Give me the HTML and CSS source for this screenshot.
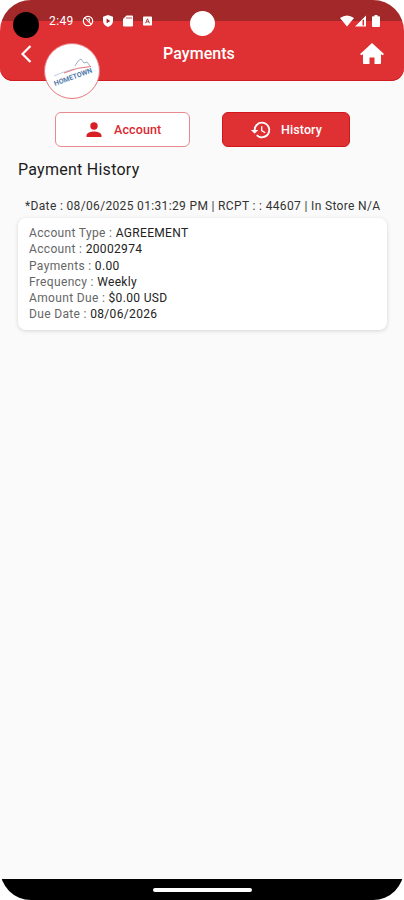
FILE: index.html
```html
<!DOCTYPE html>
<html lang="en">
<head>
<meta charset="utf-8">
<title>Payments</title>
<link rel="stylesheet" href="styles.css">
</head>
<body>
<div class="phone">
  <header class="header">
    <div class="status">
      <span class="time">2:49</span>
      <svg class="s-block" viewBox="0 0 12 12"><circle cx="6" cy="6" r="4.700"/><path d="M2.700 2.700 9.300 9.300M5.500 4h2v2.500"/></svg>
      <svg class="s-shield" viewBox="0 0 12 12"><path fill="#fff" d="M6 0 11 1.800V6c0 3-2.200 5-5 6-2.800-1-5-3-5-6V1.800z"/><path fill="#a51f22" d="M4.600 3.600 8.200 6 4.600 8.200z"/></svg>
      <svg class="s-card" viewBox="0 0 10 12"><path fill="#fff" d="M3.500.5H9q1 0 1 1v9q0 1-1 1H1q-1 0-1-1V4z"/><path stroke="#b92a2c" stroke-width=".8" d="M4 2v2M6 2v2M8 2v2"/></svg>
      <svg class="s-a" viewBox="0 0 10 10"><rect width="10" height="10" rx="1" fill="#fff"/><path fill="none" stroke="#9c2a2c" d="M2.800 7.500 5 2.500l2.200 5M3.700 6h2.600"/></svg>
      <span class="spacer"></span>
      <svg class="s-wifi" viewBox="0 0 14 12"><path fill="#fff" d="M0 3Q7-2 14 3L7 11.500z"/></svg>
      <svg class="s-cell" viewBox="0 0 12 12"><path fill="#fff" fill-rule="evenodd" d="M0 11.500 11 .5v11zM7.500 5.500v5h1.500v-6z"/></svg>
      <svg class="s-batt" viewBox="0 0 8 12"><path fill="#fff" d="M2.500 0h3v1.300H7q1 0 1 1V11q0 1-1 1H1q-1 0-1-1V2.300q0-1 1-1h1.500z"/></svg>
    </div>
    <nav class="bar">
      <svg class="back" viewBox="0 0 12 20"><path d="M10.500 2 2.500 10l8 8"/></svg>
      <h1>Payments</h1>
      <svg class="home" viewBox="0 0 24 22"><path fill="#fff" d="M12 0 24 11l-1.300 1.300L21 11.200V20q0 1-1 1H14.500v-6.500h-5V21H4q-1 0-1-1v-8.800l-1.700 1.100L0 11l4-3.600z"/></svg>
    </nav>
    <span class="cutout"></span>
    <span class="camera"></span>
    <div class="logo">
      <svg viewBox="0 0 54 54">
        <g fill="none"><path stroke="#b9c5da" stroke-width=".9" d="M9 32Q20 27 29 25"/><path stroke="#8999b5" stroke-width=".8" d="m30 22 3-5 3-2 3 4 3-1 3 4"/><path stroke="#e5737c" d="M19 29Q32 23 46 22.500"/></g>
        <text x="10" y="42" transform="rotate(-20 10 42)" textLength="40" lengthAdjust="spacingAndGlyphs">HOMETOWN</text>
      </svg>
    </div>
  </header>
  <main>
    <div class="tabs">
      <button class="tab account"><svg viewBox="0 0 16 16"><circle cx="8" cy="4" r="3.700"/><path d="M.5 15v-1.500C.5 10.500 5 9.400 8 9.400s7.500 1.100 7.500 4.100V15z"/></svg><span>Account</span></button>
      <button class="tab history"><svg viewBox="0 0 24 24"><path d="M13 3a9 9 0 0 0-9 9H1l3.890 3.890.07.14L9 12H6a7 7 0 1 1 2.060 4.940l-1.420 1.420A9 9 0 1 0 13 3zm-1 5v5l4.280 2.540.72-1.210-3.500-2.080V8z"/></svg><span>History</span></button>
    </div>
    <h2>Payment History</h2>
    <p class="receipt">*Date : 08/06/2025 01:31:29 PM | RCPT : : 44607 | In Store N/A</p>
    <section class="card">
      <p>Account Type : <b>AGREEMENT</b></p>
      <p>Account : <b>20002974</b></p>
      <p>Payments : <b>0.00</b></p>
      <p>Frequency : <b>Weekly</b></p>
      <p>Amount Due : <b>$0.00 USD</b></p>
      <p>Due Date : <b>08/06/2026</b></p>
    </section>
  </main>
  <footer><span></span></footer>
</div>
</body>
</html>
```
FILE: styles.css
```css
* { box-sizing: border-box; margin: 0; padding: 0; }
body { background: #fff; font-family: Roboto, sans-serif; color: #222; }
svg { display: block; flex: none; }
.phone { width: 404px; height: 900px; border-radius: 31px; overflow: hidden; background: #fafafa; display: flex; flex-direction: column; }
.header { position: relative; height: 81px; flex: none; border-radius: 0 0 13px 13px; background: linear-gradient(#a3282a 0 21px, #df3134 21px); box-shadow: inset 0 -1px #d01d22; }
.status { height: 42px; padding: 0 24px 0 49px; display: flex; align-items: center; color: #fff; }
.time { font-size: 12px; width: 33px; letter-spacing: .4px; }
.s-block { width: 12px; height: 12px; fill: none; stroke: #fff; stroke-width: 1.2; }
.s-shield { width: 12px; height: 12px; margin-left: 8px; }
.s-card { width: 10px; height: 12px; margin-left: 9px; }
.s-a { width: 9px; height: 10px; margin-left: 10px; }
.spacer { flex: 1; }
.s-wifi { width: 14px; height: 12px; }
.s-cell { width: 12px; height: 12px; margin-left: 1px; }
.s-batt { width: 8px; height: 12px; margin-left: 5px; }
.bar { height: 24px; padding: 0 20px; display: flex; align-items: center; justify-content: space-between; }
.back { width: 12px; height: 20px; fill: none; stroke: #fff; stroke-width: 2.2; }
.bar h1 { font-size: 16px; font-weight: 500; color: #fff; line-height: 26px; margin-left: 6px; letter-spacing: .05px; }
.home { width: 24px; height: 22px; }
.cutout { position: absolute; left: 13px; top: 12px; width: 26px; height: 26px; border-radius: 50%; background: #000; }
.camera { position: absolute; left: 190px; top: 11px; width: 25px; height: 25px; border-radius: 50%; background: #fff; }
.logo { position: absolute; left: 44px; top: 43px; width: 56px; height: 56px; border: 1px solid #e7777d; border-radius: 50%; background: #fff; overflow: hidden; }
.logo text { font: 700 7px Roboto, sans-serif; fill: #5379aa; }
main { flex: 1; padding: 31px 17px 0 18px; }
.tabs { display: flex; gap: 32px; padding-left: 37px; }
.tab { height: 35px; display: flex; align-items: center; border: 1px solid #e8898f; border-radius: 6px; font: 500 12.500px Roboto, sans-serif; }
.account { width: 135px; padding-left: 30px; gap: 12px; background: #fff; color: #dc2830; letter-spacing: .12px; }
.account svg { width: 16px; height: 16px; fill: #d81f26; }
.history { width: 128px; padding-left: 27px; gap: 9px; background: #df3033; border-color: #d3161b; color: #fff; letter-spacing: .1px; }
.history svg { width: 22px; height: 22px; fill: #fff; }
h2 { margin-top: 12px; font-size: 16px; line-height: 22px; font-weight: 400; color: #1c1c1c; letter-spacing: .26px; }
.receipt { margin: 17px 0 0 7px; font-size: 12px; line-height: 16px; white-space: nowrap; color: #333; letter-spacing: .345px; }
.card { margin-top: 4px; height: 112px; padding: 7px 11px; border-radius: 8px; background: #fff; box-shadow: 0 1px 4px rgba(0,0,0,.15); }
.card p { font-size: 12px; line-height: 16.300px; color: #666; white-space: nowrap; letter-spacing: .34px; }
.card b { font-weight: 400; color: #222; }
footer { height: 21px; background: #000; display: flex; justify-content: center; align-items: center; }
footer span { width: 99px; height: 4px; border-radius: 2px; background: #fff; }
```
